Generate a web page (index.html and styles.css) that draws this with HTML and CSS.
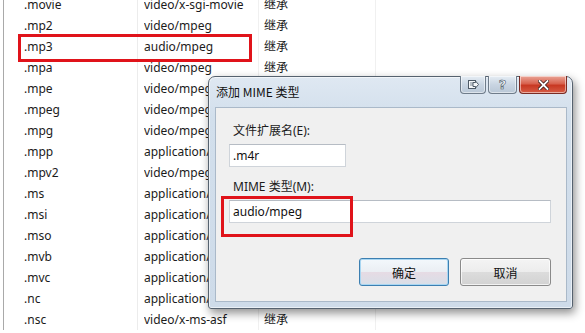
FILE: index.html
```html
<!DOCTYPE html>
<html lang="zh-CN">
<head>
<meta charset="utf-8">
<title>添加 MIME 类型</title>
<link rel="stylesheet" href="styles.css">
</head>
<body>
<div class="page">
  <div class="list">
    <div class="row"><span class="c1">.movie</span><span class="c2">video/x-sgi-movie</span><span class="c3">继承</span></div>
    <div class="row"><span class="c1">.mp2</span><span class="c2">video/mpeg</span><span class="c3">继承</span></div>
    <div class="row"><span class="c1">.mp3</span><span class="c2">audio/mpeg</span><span class="c3">继承</span></div>
    <div class="row"><span class="c1">.mpa</span><span class="c2">video/mpeg</span><span class="c3">继承</span></div>
    <div class="row"><span class="c1">.mpe</span><span class="c2">video/mpeg</span><span class="c3">继承</span></div>
    <div class="row"><span class="c1">.mpeg</span><span class="c2">video/mpeg</span><span class="c3">继承</span></div>
    <div class="row"><span class="c1">.mpg</span><span class="c2">video/mpeg</span><span class="c3">继承</span></div>
    <div class="row"><span class="c1">.mpp</span><span class="c2">application/vnd.ms-project</span><span class="c3">继承</span></div>
    <div class="row"><span class="c1">.mpv2</span><span class="c2">video/mpeg</span><span class="c3">继承</span></div>
    <div class="row"><span class="c1">.ms</span><span class="c2">application/x-troff-ms</span><span class="c3">继承</span></div>
    <div class="row"><span class="c1">.msi</span><span class="c2">application/octet-stream</span><span class="c3">继承</span></div>
    <div class="row"><span class="c1">.mso</span><span class="c2">application/x-msoffice</span><span class="c3">继承</span></div>
    <div class="row"><span class="c1">.mvb</span><span class="c2">application/x-msmediaview</span><span class="c3">继承</span></div>
    <div class="row"><span class="c1">.mvc</span><span class="c2">application/x-miva-compiled</span><span class="c3">继承</span></div>
    <div class="row"><span class="c1">.nc</span><span class="c2">application/x-netcdf</span><span class="c3">继承</span></div>
    <div class="row"><span class="c1">.nsc</span><span class="c2">video/x-ms-asf</span><span class="c3">继承</span></div>
  </div>

  <div class="mark mark-row"></div>

  <div class="dialog">
    <div class="titlebar">
      <span class="title">添加 MIME 类型</span>
      <div class="tbtns">
        <span class="tbtn tb-send"><svg width="12" height="11" viewBox="0 0 12 11"><rect x="1.5" y="1.5" width="7" height="8" fill="#f4f6f8" stroke="#4e5a66"/><path d="M3 4h3M3 6h3" stroke="#7a8692"/><path d="M6 3.5h2.5V2l3 3.5-3 3.5V7.5H6z" fill="#f4f6f8" stroke="#4e5a66" stroke-linejoin="round"/></svg></span>
        <span class="tbtn tb-help">?</span>
        <span class="tbtn tb-close"><svg width="11" height="10" viewBox="0 0 11 10"><path d="M1.5 1l8 8M9.5 1l-8 8" stroke="#3a1a16" stroke-width="3.4" stroke-linecap="square"/><path d="M1.5 1l8 8M9.5 1l-8 8" stroke="#ffffff" stroke-width="1.8" stroke-linecap="square"/></svg></span>
      </div>
    </div>
    <div class="client">
      <div class="label">文件扩展名(E):</div>
      <div class="field field-short">.m4r</div>
      <div class="label label-2">MIME 类型(M):</div>
      <div class="field field-long">audio/mpeg</div>
      <div class="actions">
        <span class="btn btn-ok">确定</span>
        <span class="btn">取消</span>
      </div>
    </div>
  </div>

  <div class="mark mark-field"></div>
</div>
</body>
</html>
```
FILE: styles.css
```css
html, body {
  margin: 0;
  padding: 0;
  background: #ffffff;
}
body {
  width: 585px;
  height: 333px;
  overflow: hidden;
  font-family: "Noto Sans", "Noto Sans CJK SC", sans-serif;
  font-size: 12px;
  color: #1b1b1b;
}
.page {
  position: relative;
  width: 585px;
  height: 333px;
  overflow: hidden;
}
.list {
  margin-top: -6px;
  margin-left: 3px;
  border-left: 1px solid #a9a9a9;
  background:
    linear-gradient(#ececec, #ececec) 133px 0 / 1px 100% no-repeat,
    linear-gradient(#f0f0f0, #f0f0f0) 254px 0 / 1px 100% no-repeat,
    linear-gradient(#f0f0f0, #f0f0f0) 371px 0 / 1px 100% no-repeat,
    #ffffff;
}
.row {
  display: flex;
  height: 21px;
  line-height: 21px;
  white-space: nowrap;
}
.c1 { width: 120px; padding-left: 20px; flex: none; }
.c2 { width: 120px; flex: none; overflow: hidden; }
.c3 { width: 60px; flex: none; overflow: hidden; }

.mark {
  position: absolute;
  border: 3px solid #e0131a;
  box-sizing: border-box;
}
.mark-row { left: 18px; top: 34px; width: 234px; height: 28px; }
.mark-field { left: 221px; top: 196px; width: 132px; height: 41px; }

.dialog {
  position: absolute;
  left: 208px;
  top: 76px;
  width: 365px;
  height: 233px;
  box-sizing: border-box;
  border: 1px solid #56626f;
  border-radius: 7px 7px 3px 3px;
  background: linear-gradient(#dfe8f2, #d2dfec 40px, #cedbe9);
  box-shadow: inset 0 0 0 1px rgba(255,255,255,0.55), 2px 4px 10px rgba(0,0,0,0.45);
  display: flex;
  flex-direction: column;
}
.titlebar {
  height: 30px;
  display: flex;
  align-items: flex-start;
  justify-content: space-between;
  padding-left: 7px;
  padding-right: 5px;
}
.title {
  margin-top: 6px;
  line-height: 18px;
  color: #111;
  font-family: "Noto Sans CJK SC", sans-serif;
  font-size: 12px;
}
.tbtns {
  display: flex;
  gap: 2px;
  margin-top: -1px;
}
.tbtn {
  height: 18px;
  box-sizing: border-box;
  border: 1px solid #6f7c8a;
  border-top: none;
  border-radius: 0 0 4px 4px;
  display: flex;
  align-items: center;
  justify-content: center;
  background: linear-gradient(#e6edf4, #c9d5e2 50%, #b9c7d6);
  box-shadow: inset 0 0 0 1px rgba(255,255,255,0.5);
}
.tb-send { width: 26px; }
.tb-help {
  width: 29px;
  font-family: "DejaVu Sans", sans-serif;
  font-size: 13px;
  font-weight: bold;
  color: #f7f9fb;
  -webkit-text-stroke: 0.6px #4a5663;
  line-height: 16px;
}
.tb-close {
  width: 48px;
  border-color: #7a2b23;
  background: linear-gradient(#eaa597, #d8624e 45%, #c83822 55%, #d65d46);
}

.client {
  flex: 1;
  margin: 0 5px 6px 6px;
  border: 1px solid #aab9c9;
  background: #f0f0f0;
  padding: 15px 15px 0 13px;
  font-family: "Noto Sans", "Noto Sans CJK SC", sans-serif;
}
.label {
  padding-left: 4px;
  line-height: 16px;
  height: 16px;
  color: #1b1b1b;
}
.label-2 { margin-top: 12px; }
.field {
  margin-top: 5px;
  height: 23px;
  box-sizing: border-box;
  border: 1px solid #cfd4da;
  border-top-color: #b6bcc4;
  background: #ffffff;
  padding-left: 3px;
  line-height: 21px;
  color: #111;
}
.field-short { width: 117px; }
.field-long { width: 100%; }
.actions {
  margin-top: 35px;
  display: flex;
  justify-content: flex-end;
  gap: 11px;
}
.btn {
  width: 91px;
  height: 28px;
  box-sizing: border-box;
  border: 1px solid #8a8a8a;
  border-radius: 3px;
  background: linear-gradient(#f4f4f4, #ececec 50%, #dcdcdc 51%, #d2d2d2);
  box-shadow: inset 0 0 0 1px rgba(255,255,255,0.7);
  display: flex;
  align-items: center;
  justify-content: center;
  font-family: "Noto Sans CJK SC", sans-serif;
  color: #111;
}
.btn-ok {
  width: 90px;
  border-color: #3c7fb1;
  background: linear-gradient(#f3f8fc, #eaeef3 50%, #e6dbe4 51%, #d8dfe8);
  box-shadow: inset 0 0 0 1px #a8d6f2;
}
```
